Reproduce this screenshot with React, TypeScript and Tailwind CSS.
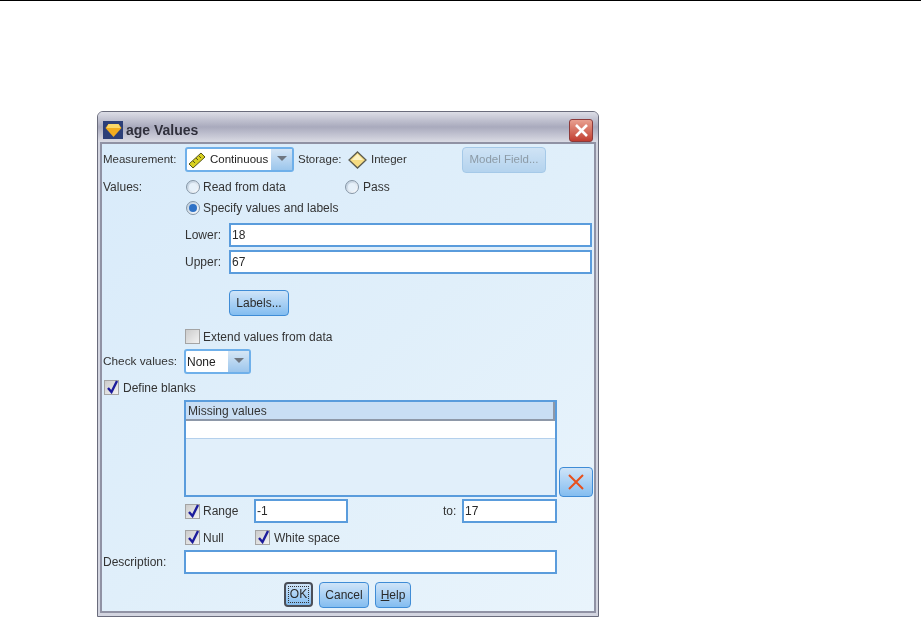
import type { ReactNode } from "react";

function Arrow() {
  return (
    <svg width="10" height="5" viewBox="0 0 10 5">
      <path d="M0 0h10L5 5z" fill="#6f7680" />
    </svg>
  );
}

function Radio({ on }: { on?: boolean }) {
  return (
    <span className="flex h-[14px] w-[14px] shrink-0 items-center justify-center rounded-full border border-[#8696a6] bg-gradient-to-br from-[#b9cbdc] to-[#ffffff]">
      <span className={on ? "h-[8px] w-[8px] rounded-full bg-[#2f72c6]" : "h-[8px] w-[8px] rounded-full bg-[#e6f1fa]"} />
    </span>
  );
}

function Check({ on }: { on?: boolean }) {
  return (
    <span className="relative flex h-[15px] w-[15px] shrink-0 items-center justify-center border border-[#a4a4a4] bg-gradient-to-br from-[#cccccc] to-[#f2f2f2]">
      {on && (
        <svg className="absolute left-[1px] top-[-2px]" width="13" height="15" viewBox="0 0 13 15">
          <path d="M2 9l3.500 4L11 2" fill="none" stroke="#1c1c9c" strokeWidth="2.400" />
        </svg>
      )}
    </span>
  );
}

function Field({ w, children }: { w: string; children?: ReactNode }) {
  return (
    <div className={`${w} flex h-[24px] items-center border-2 border-[#5a9cdc] bg-white pl-[1px] text-[#2a2a2a]`}>
      {children}
    </div>
  );
}

function Btn({ w, children, muted }: { w: string; children: ReactNode; muted?: boolean }) {
  return (
    <div
      className={
        muted
          ? `${w} flex h-[26px] items-center justify-center rounded-[4px] border border-[#a5c9e8] bg-gradient-to-b from-[#cfe3f5] to-[#b4d3ee] text-[#8c9aa6]`
          : `${w} flex h-[26px] items-center justify-center rounded-[4px] border border-[#3f8cd6] bg-gradient-to-b from-[#cfe4f8] to-[#83bdf0] text-[#2a2a2a]`
      }
    >
      {children}
    </div>
  );
}

function Combo({ w, children }: { w: string; children: ReactNode }) {
  return (
    <div className={`${w} flex h-[25px] items-stretch rounded-[3px] border-2 border-[#6fb0ea] bg-white`}>
      <div className="flex flex-1 items-center gap-[4px] overflow-hidden pl-[1px] whitespace-nowrap text-[#222]">{children}</div>
      <div className="flex w-[21px] items-start justify-center bg-gradient-to-b from-[#d6e6f5] to-[#9cc6ec] pt-[7px]">
        <Arrow />
      </div>
    </div>
  );
}

export default function App() {
  return (
    <div className="h-[617px] w-[921px] overflow-hidden bg-white font-['Liberation_Sans',sans-serif] text-[12px] text-[#333]">
      <div className="h-px w-full bg-black" />
      <div className="ml-[97px] mt-[110px] h-[506px] w-[502px] rounded-t-[6px] border border-[#6a6c7c] bg-[#d3d5e0] blur-[0.35px]">
        {/* title bar */}
        <div className="flex h-[30px] items-center rounded-t-[5px] bg-gradient-to-b from-[#dcdde6] via-[#a9aabd] to-[#dadbe4] pl-[5px] pr-[5px] pt-[6px]">
          <div className="flex h-[18px] w-[20px] items-center justify-center bg-[#2c3f78]">
            <svg width="17" height="16" viewBox="0 0 16 16">
              <path d="M3 2h10l3 4-8 9-8-9z" fill="#f2ac1e" />
              <path d="M3 2h10l2 4H1z" fill="#fbd868" />
            </svg>
          </div>
          <span className="ml-[3px] text-[14px] font-bold text-[#30303c]">age Values</span>
          <div className="ml-auto flex h-[23px] w-[24px] items-center justify-center rounded-[3px] border border-[#8c3a3a] bg-gradient-to-b from-[#e8a090] to-[#c03c30]">
            <svg width="15" height="13" viewBox="0 0 15 13">
              <path d="M2 1l11 11M13 1L2 12" stroke="#fff" strokeWidth="2.600" />
            </svg>
          </div>
        </div>

        {/* body */}
        <div className="mx-[2px] h-[471px] border-2 border-[#9092a4] bg-gradient-to-br from-[#d9ebfa] via-[#e0effa] to-[#e9f4fc]">
          <div className="flex h-[31px] items-center text-[11.500px]">
            <span className="ml-[1px] w-[82px]">Measurement:</span>
            <Combo w="w-[109px]">
              <svg width="18" height="18" viewBox="0 0 18 18" className="shrink-0">
                <path d="M1 13L13 2l4 4L5 17z" fill="#d8d020" stroke="#55551a" strokeWidth="1" />
                <path d="M5 10l2 2M8 7l2 2M11 5l2 2" stroke="#55551a" strokeWidth="1" />
              </svg>
              <span>Continuous</span>
            </Combo>
            <span className="ml-[4px] w-[44px]">Storage:</span>
            <svg width="19" height="18" viewBox="0 0 19 18" className="ml-[6px] shrink-0">
              <path d="M9.500 1l8.500 8-8.500 8L1 9z" fill="#f6dc82" stroke="#5c5c50" strokeWidth="1.300" />
              <path d="M9.500 3l5.500 6H4z" fill="#fdf3c4" />
            </svg>
            <span className="ml-[4px] w-[36px]">Integer</span>
            <span className="ml-[55px]">
              <Btn w="w-[84px]" muted>Model Field...</Btn>
            </span>
          </div>

          <div className="flex h-[24px] items-center">
            <span className="ml-[1px] w-[83px]">Values:</span>
            <Radio />
            <span className="ml-[3px] w-[142px]">Read from data</span>
            <Radio />
            <span className="ml-[4px]">Pass</span>
          </div>
          <div className="flex h-[18px] items-center pl-[84px]">
            <Radio on />
            <span className="ml-[3px]">Specify values and labels</span>
          </div>

          <div className="ml-[83px] mt-[6px] flex items-center">
            <span className="w-[44px]">Lower:</span>
            <Field w="w-[363px]">18</Field>
          </div>
          <div className="ml-[83px] mt-[3px] flex items-center">
            <span className="w-[44px]">Upper:</span>
            <Field w="w-[363px]">67</Field>
          </div>
          <div className="ml-[127px] mt-[16px]">
            <Btn w="w-[60px]">Labels...</Btn>
          </div>

          <div className="ml-[83px] mt-[13px] flex h-[15px] items-center">
            <Check />
            <span className="ml-[3px]">Extend values from data</span>
          </div>

          <div className="mt-[5px] flex items-center">
            <span className="ml-[1px] w-[81px] text-[11.800px]">Check values:</span>
            <Combo w="w-[67px]">None</Combo>
          </div>

          <div className="ml-[2px] mt-[6px] flex h-[15px] items-center">
            <Check on />
            <span className="ml-[4px]">Define blanks</span>
          </div>

          {/* missing values table and delete button */}
          <div className="relative ml-[82px] mt-[5px] h-[97px] w-[373px] border-2 border-[#5a9cdc] bg-[#e1effa]">
            <div className="h-[19px] border-b-2 border-r-2 border-b-[#8e98a8] border-r-[#8e98a8] bg-[#c9def4] pl-[2px] leading-[18px]">Missing values</div>
            <div className="h-[18px] border-b border-[#b4d0ec] bg-white" />
            <div className="absolute left-[373px] top-[65px] flex h-[30px] w-[34px] items-center justify-center rounded-[4px] border border-[#3f8cd6] bg-gradient-to-b from-[#cfe4f8] to-[#83bdf0]">
              <svg width="18" height="16" viewBox="0 0 18 16">
                <path d="M2 1l14 14M16 1L2 15" stroke="#e8501c" strokeWidth="2" />
              </svg>
            </div>
          </div>

          <div className="mt-[2px] flex h-[24px] items-center">
            <span className="ml-[83px]"><Check on /></span>
            <span className="ml-[3px] w-[51px]">Range</span>
            <Field w="w-[94px]">-1</Field>
            <span className="ml-[95px] w-[19px]">to:</span>
            <Field w="w-[95px]">17</Field>
          </div>

          <div className="mt-[7px] flex h-[15px] items-center">
            <span className="ml-[83px]"><Check on /></span>
            <span className="ml-[3px] w-[52px]">Null</span>
            <Check on />
            <span className="ml-[4px]">White space</span>
          </div>

          <div className="mt-[5px] flex items-center">
            <span className="ml-[1px] w-[81px]">Description:</span>
            <Field w="w-[373px]" />
          </div>

          <div className="ml-[182px] mt-[8px] flex gap-[6px]">
            <div className="flex h-[25px] w-[29px] items-center justify-center rounded-[4px] border-2 border-[#4b4f58] bg-gradient-to-b from-[#cfe4f8] to-[#83bdf0] text-[#2a2a2a]">
              <span className="border border-dotted border-[#333] px-[1px] leading-[15px]">OK</span>
            </div>
            <Btn w="w-[50px]">Cancel</Btn>
            <Btn w="w-[36px]"><span><u>H</u>elp</span></Btn>
          </div>
        </div>
      </div>
    </div>
  );
}
